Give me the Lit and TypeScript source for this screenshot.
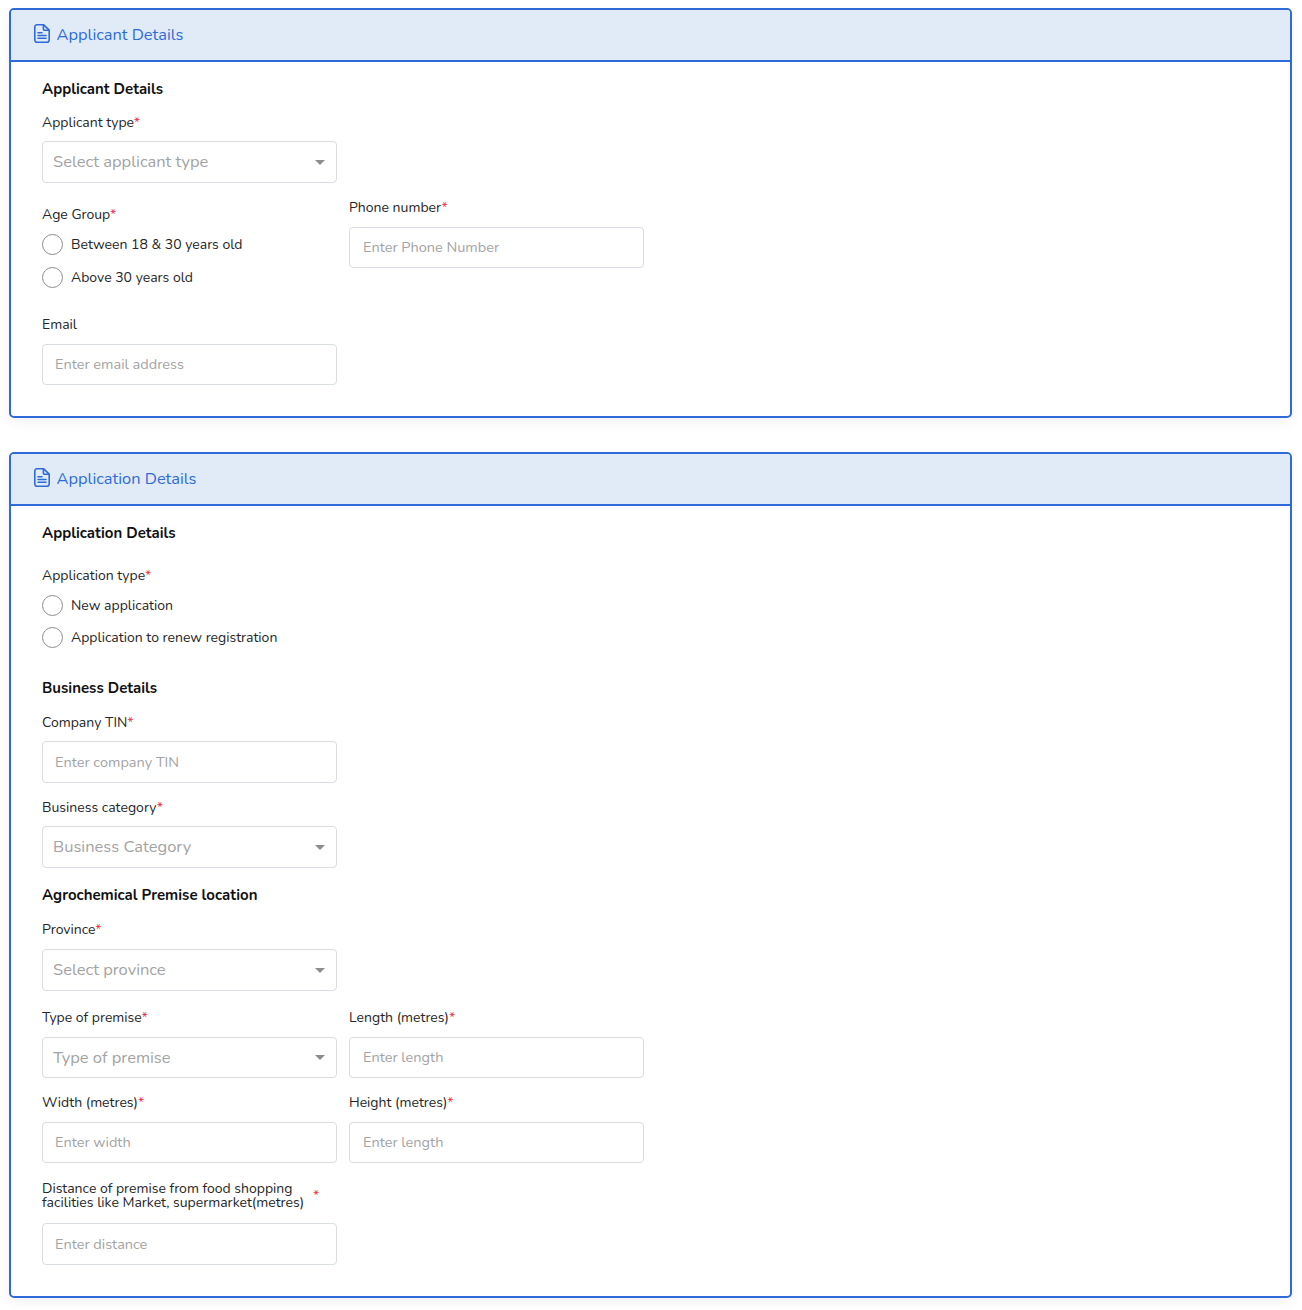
import { LitElement, html, css } from "lit";
import { customElement } from "lit/decorators.js";

const caret = html`<svg class="caret" width="10" height="5" viewBox="0 0 10 5"><path d="M0 0h10L5 5z" fill="#8c8c8c" /></svg>`;

const docIcon = html`<svg class="doc" width="16" height="19" viewBox="0 0 16 19" fill="none" stroke="#2f6bd8" stroke-width="1.6" stroke-linejoin="round">
    <path d="M2.5 .8h7.2l5.5 5.3v10a2.1 2.1 0 0 1-2.1 2.1H2.9a2.1 2.1 0 0 1-2.1-2.1V2.9A2.1 2.1 0 0 1 2.5.8z" />
    <path d="M9.4 1v4a1.2 1.2 0 0 0 1.2 1.2h4.4" />
    <path d="M4 8.8h4M4 11.5h8M4 14.2h8" stroke-linecap="round" />
</svg>`;

@customElement("app-root")
export class AppRoot extends LitElement {
    label(text: string, required = true) {
        return html`<div class="label">${text}${required ? html`<span class="req">*</span>` : ""}</div>`;
    }

    select(placeholder: string, short = false) {
        return html`<div class="select ${short ? "short" : ""}"><span>${placeholder}</span>${caret}</div>`;
    }

    input(placeholder: string, short = false) {
        return html`<input class="input ${short ? "short" : ""}" placeholder=${placeholder} />`;
    }

    radio(text: string) {
        return html`<label class="radio"><span class="circle"></span><span>${text}</span></label>`;
    }

    header(title: string) {
        return html`<div class="header">${docIcon}<span>${title}</span></div>`;
    }

    render() {
        return html`
            <section class="card first">
                ${this.header("Applicant Details")}
                <div class="body">
                    <div class="heading">Applicant Details</div>
                    <div class="field mt14 tight">
                        ${this.label("Applicant type")} ${this.select("Select applicant type")}
                    </div>
                    <div class="row mt15">
                        <div>
                            <div class="age">
                                ${this.label("Age Group")}
                                <div class="radios wide">
                                    ${this.radio("Between 18 & 30 years old")} ${this.radio("Above 30 years old")}
                                </div>
                            </div>
                            <div class="field email">
                                ${this.label("Email", false)} ${this.input("Enter email address", true)}
                            </div>
                        </div>
                        <div class="field">${this.label("Phone number")} ${this.input("Enter Phone Number", true)}</div>
                    </div>
                </div>
            </section>

            <section class="card second">
                ${this.header("Application Details")}
                <div class="body">
                    <div class="heading">Application Details</div>
                    <div class="mt23 group">
                        ${this.label("Application type")}
                        <div class="radios">
                            ${this.radio("New application")} ${this.radio("Application to renew registration")}
                        </div>
                    </div>
                    <div class="heading mt29">Business Details</div>
                    <div class="field mt15 tight">${this.label("Company TIN")} ${this.input("Enter company TIN")}</div>
                    <div class="field mt15 tight">${this.label("Business category")} ${this.select("Business Category")}</div>
                    <div class="heading mt17">Agrochemical Premise location</div>
                    <div class="field mt15">${this.label("Province")} ${this.select("Select province")}</div>
                    <div class="row mt17">
                        <div class="field">${this.label("Type of premise")} ${this.select("Type of premise", true)}</div>
                        <div class="field">${this.label("Length (metres)")} ${this.input("Enter length", true)}</div>
                    </div>
                    <div class="row mt15">
                        <div class="field">${this.label("Width (metres)")} ${this.input("Enter width", true)}</div>
                        <div class="field">${this.label("Height (metres)")} ${this.input("Enter length", true)}</div>
                    </div>
                    <div class="field distance">
                        <div class="label long">
                            <span>Distance of premise from food shopping facilities like Market, supermarket(metres)</span>
                            <span class="req">*</span>
                        </div>
                        ${this.input("Enter distance")}
                    </div>
                </div>
            </section>
        `;
    }

    static styles = css`
        :host {
            display: block;
            box-sizing: border-box;
            height: 1310px;
            padding: 8px 10px 0 9px;
            background: #fff;
            font-family: "Nunito", Lato, "Liberation Sans", sans-serif;
            font-size: 14px;
            color: #262626;
            overflow: hidden;
        }

        * {
            box-sizing: border-box;
        }

        .card {
            border: 2px solid #2f6bd8;
            border-radius: 5px;
            box-shadow: 0 5px 12px rgba(0, 0, 0, 0.05);
        }

        .card.first {
            height: 410px;
        }

        .card.second {
            height: 846px;
            margin-top: 34px;
        }

        .header {
            display: flex;
            align-items: center;
            gap: 6.5px;
            height: 52px;
            padding: 0 0 2px 23px;
            background: #e1ebf8;
            border-bottom: 2px solid #2f6bd8;
            border-radius: 3px 3px 0 0;
            color: #2f6bd8;
            font-size: 16.4px;
        }

        .doc {
            flex: none;
            margin-top: -2px;
        }

        .body {
            padding: 17px 31px 0;
        }

        .heading {
            line-height: 20px;
            font-size: 15px;
            font-weight: 700;
            color: #111;
        }

        .label {
            line-height: 20px;
            margin-bottom: 9px;
        }

        .tight .label {
            margin-bottom: 8px;
        }

        .req {
            color: #f0304a;
        }

        .mt14 {
            margin-top: 14px;
        }
        .mt15 {
            margin-top: 15px;
        }
        .mt17 {
            margin-top: 17px;
        }
        .mt23 {
            margin-top: 23px;
        }
        .mt29 {
            margin-top: 29px;
        }

        .row {
            display: grid;
            grid-template-columns: 295px 295px;
            column-gap: 12px;
            align-items: start;
        }

        .field {
            width: 295px;
        }

        .age {
            padding-top: 7px;
        }

        .age .label,
        .group .label {
            margin-bottom: 7px;
        }

        .email {
            margin-top: 26px;
        }

        .distance {
            margin-top: 19px;
        }

        .select,
        .input {
            display: flex;
            align-items: center;
            width: 295px;
            height: 42px;
            background: #fff;
            border: 1px solid #d9dce1;
            border-radius: 4px;
        }

        .short {
            height: 41px;
        }

        .select {
            justify-content: space-between;
            padding: 0 11px 1px 10px;
            font-size: 16.5px;
            color: #a3a3a3;
        }

        .caret {
            margin-top: 1px;
        }

        .input {
            padding: 0 12px 1px;
            font: inherit;
            font-size: 14.5px;
            outline: none;
        }

        .row > .field:last-child .input {
            padding-left: 13px;
        }

        .input::placeholder {
            color: #a3a3a3;
            opacity: 1;
        }

        .radios {
            display: flex;
            flex-direction: column;
            gap: 8px;
        }

        .radios.wide {
            gap: 9px;
        }

        .radio {
            display: flex;
            align-items: center;
            gap: 8px;
            height: 24px;
        }

        .circle {
            width: 21px;
            height: 21px;
            background: #fff;
            border: 1px solid #8c8c8c;
            border-radius: 50%;
        }

        .long {
            display: flex;
            align-items: center;
            line-height: 14px;
            width: 295px;
            margin-bottom: 13px;
        }

        .long span:first-child {
            flex: none;
            width: 271px;
        }
    `;
}
